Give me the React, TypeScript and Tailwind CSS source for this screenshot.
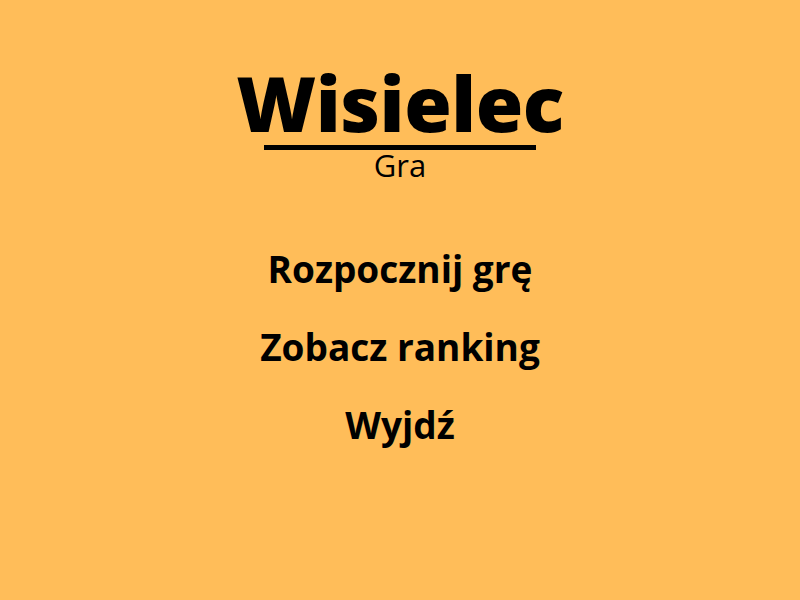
export default function App() {
    const items = ['Rozpocznij grę', 'Zobacz ranking', 'Wyjdź'];

    return (
        <div className="flex h-[600px] w-[800px] flex-col items-center bg-[#ffbd59] font-['Open_Sans',sans-serif] text-black">
            {/* Title */}
            <h1 className="mt-[61px] text-[77px] font-extrabold leading-[84px] tracking-[-0.5px]">Wisielec</h1>
            <div className="h-[5px] w-[272px] bg-black" />
            <p className="text-[31px] leading-[30px]">Gra</p>

            {/* Menu */}
            <nav className="mt-[65px] flex flex-col items-center gap-[30px]">
                {items.map((item) => (
                    <button key={item} className="text-[37px] font-bold leading-[48px]">
                        {item}
                    </button>
                ))}
            </nav>
        </div>
    );
}
